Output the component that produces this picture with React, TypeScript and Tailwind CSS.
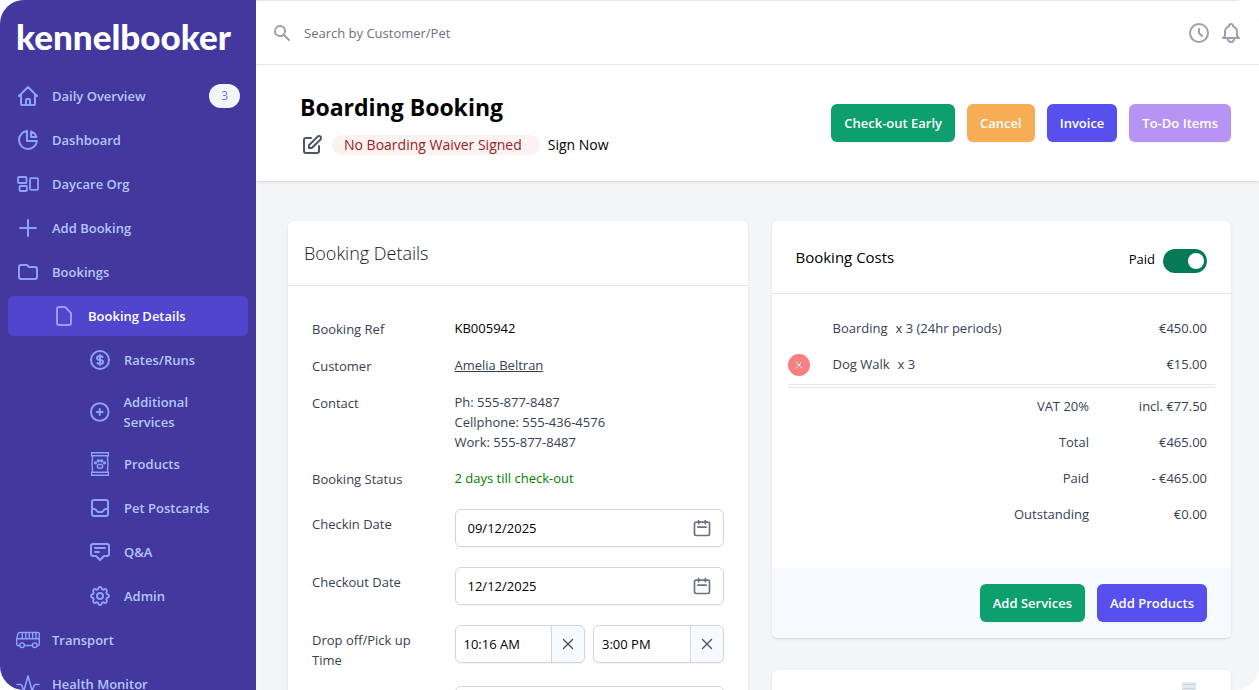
import type { ComponentType, ReactNode } from "react";
import {
  HiOutlineAnnotation,
  HiOutlineBell,
  HiOutlineCalendar,
  HiOutlineChartPie,
  HiOutlineClock,
  HiOutlineCog,
  HiOutlineCurrencyDollar,
  HiOutlineDocument,
  HiOutlineFolder,
  HiOutlineHome,
  HiOutlineInbox,
  HiOutlinePencilAlt,
  HiOutlinePlus,
  HiOutlinePlusCircle,
  HiSearch,
} from "react-icons/hi";

type IconProps = { className?: string };

const DaycareIcon = ({ className }: IconProps) => (
  <svg className={className} viewBox="0 0 24 24" fill="none" stroke="currentColor" strokeWidth="1.8">
    <rect x="2" y="5" width="8.5" height="6" rx="1" />
    <rect x="3.5" y="14" width="7.5" height="5" rx="1" />
    <rect x="14" y="6.2" width="8" height="11.6" rx="1" />
  </svg>
);

const FoodBagIcon = ({ className }: IconProps) => (
  <svg className={className} viewBox="0 0 24 24" fill="none" stroke="currentColor" strokeWidth="1.4">
    <path d="M3.6 0.7h16.8v3H3.6zM3.6 20.3h16.8v3H3.6z" />
    <path d="M4.6 3.7c-.7 5.5-.7 11 0 16.6M19.4 3.7c.7 5.5.7 11 0 16.6" />
    <ellipse cx="12" cy="14.2" rx="2.7" ry="2" />
    <g fill="currentColor" strokeWidth="0.8">
      <circle cx="7.6" cy="10.8" r="1.3" />
      <circle cx="10.4" cy="8.8" r="1.3" />
      <circle cx="13.6" cy="8.8" r="1.3" />
      <circle cx="16.4" cy="10.8" r="1.3" />
    </g>
  </svg>
);

const BusIcon = ({ className }: IconProps) => (
  <svg className={className} viewBox="0 0 24 24" fill="none" stroke="currentColor" strokeWidth="1.4">
    <path d="M3.4 17.5H2A1.3 1.3 0 01.7 16.2V11l1.2-5.300A1.900 1.900 0 013.700 4.500h18.200a1.400 1.400 0 011.400 1.400v10.300a1.300 1.300 0 01-1.300 1.300h-.7M8.600 17.500h7.800" />
    <path d="M1 10.800h22.300M6.200 4.500v5q0 1.300-1.500 1.300M9.800 4.500v6M13.200 4.500v6M16.600 4.500v6M20 4.500v6" />
    <circle cx="6" cy="17.200" r="2.300" />
    <circle cx="18.800" cy="17.200" r="2.300" />
  </svg>
);

const PulseIcon = ({ className }: IconProps) => (
  <svg
    className={className}
    viewBox="0 0 24 24"
    fill="none"
    stroke="currentColor"
    strokeWidth="1.6"
    strokeLinecap="round"
    strokeLinejoin="round"
  >
    <path d="M1 12.500h3.500c.8 0 1.200.5 1.500 1.300l1.800 5.200L12 4l4.200 15 1.800-5.200c.3-.8.700-1.300 1.500-1.300H23" />
  </svg>
);

const CrossIcon = ({ className }: IconProps) => (
  <svg className={className} viewBox="0 0 12 12" fill="none" stroke="currentColor" strokeWidth="1.4" strokeLinecap="round">
    <path d="M1.500 1.500l9 9M10.500 1.500l-9 9" />
  </svg>
);

type NavItem = {
  label: string;
  icon: ComponentType<IconProps>;
  level?: number;
  badge?: number;
  active?: boolean;
};

const navItems: NavItem[] = [
  { label: "Daily Overview", icon: HiOutlineHome, badge: 3 },
  { label: "Dashboard", icon: HiOutlineChartPie },
  { label: "Daycare Org", icon: DaycareIcon },
  { label: "Add Booking", icon: HiOutlinePlus },
  { label: "Bookings", icon: HiOutlineFolder },
  { label: "Booking Details", icon: HiOutlineDocument, level: 1, active: true },
  { label: "Rates/Runs", icon: HiOutlineCurrencyDollar, level: 2 },
  { label: "Additional Services", icon: HiOutlinePlusCircle, level: 2 },
  { label: "Products", icon: FoodBagIcon, level: 2 },
  { label: "Pet Postcards", icon: HiOutlineInbox, level: 2 },
  { label: "Q&A", icon: HiOutlineAnnotation, level: 2 },
  { label: "Admin", icon: HiOutlineCog, level: 2 },
  { label: "Transport", icon: BusIcon },
  { label: "Health Monitor", icon: PulseIcon },
];

const indents = ["pl-2", "pl-11", "pl-20"];

const Sidebar = () => {
  return (
    <aside className="w-64 shrink-0 overflow-hidden bg-[#42389d]">
      <div className="flex h-[72px] items-center px-4">
        <a href="#" className="font-[Lato] text-[35px] leading-10 font-black text-white">
          kennelbooker
        </a>
      </div>
      <nav className="flex flex-col gap-1 px-2 pt-1">
        {navItems.map(({ label, icon: Icon, level = 0, badge, active }) => (
          <a
            key={label}
            href="#"
            className={`flex items-center gap-3 rounded-md py-2 pr-2 font-semibold leading-5 ${indents[level]} ${
              active ? "bg-[#5145cd] text-white" : "text-[#b4c6fc]"
            }`}
          >
            <Icon className="size-6 min-w-0 text-[#8da2fb]" />
            <span className={level === 2 ? "min-w-0" : "flex-1"}>{label}</span>
            {badge && (
              <span className="rounded-full bg-[#f4f5f7] px-3 py-0.5 text-xs leading-5 font-normal text-[#6875f5]">
                {badge}
              </span>
            )}
          </a>
        ))}
      </nav>
    </aside>
  );
};

const TopBar = () => {
  return (
    <header className="flex h-[65px] items-center border-y border-gray-200 bg-white px-4">
      <label htmlFor="search" aria-label="Search" className="text-gray-400">
        <HiSearch className="size-5" />
      </label>
      <input
        id="search"
        type="search"
        placeholder="Search by Customer/Pet"
        className="ml-3 h-10 flex-1 outline-none placeholder:text-gray-500"
      />
      <div className="flex gap-2 text-gray-400">
        <button type="button" aria-label="History">
          <HiOutlineClock className="size-6" />
        </button>
        <button type="button" aria-label="Notifications">
          <HiOutlineBell className="size-6" />
        </button>
      </div>
    </header>
  );
};

const Button = ({ color, children }: { color: string; children: ReactNode }) => (
  <button
    type="button"
    className={`rounded-md px-[13px] py-[9px] leading-5 font-semibold text-white shadow-xs ${color}`}
  >
    {children}
  </button>
);

const PageHeading = () => {
  return (
    <div className="relative flex items-center justify-between bg-white py-6 pr-7 pl-11 shadow-sm">
      <div>
        <h1 className="text-[23px] leading-9 font-bold text-black">Boarding Booking</h1>
        <div className="mt-2 flex items-center text-sm font-medium">
          <button type="button" aria-label="Edit booking" className="text-gray-600">
            <HiOutlinePencilAlt className="size-6" />
          </button>
          <span className="ml-2 rounded-full bg-[#fdf2f2] pr-[18px] pl-3 leading-5 text-[#9b1c1c]">
            No Boarding Waiver Signed
          </span>
          <a href="#" className="ml-2 text-black">
            Sign Now
          </a>
        </div>
      </div>
      <div className="flex gap-3">
        <Button color="bg-[#0e9f6e]">Check-out Early</Button>
        <Button color="bg-[#f6ad55]">Cancel</Button>
        <Button color="bg-[#5850ec]">Invoice</Button>
        <Button color="bg-[#b794f4]">To-Do Items</Button>
      </div>
    </div>
  );
};

const DetailRow = ({ label, children }: { label: string; children: ReactNode }) => (
  <div className="grid grid-cols-3 gap-4">
    <dt className="mt-px">{label}</dt>
    <dd className="col-span-2">{children}</dd>
  </div>
);

const DateRow = ({ id, label, value }: { id: string; label: string; value: string }) => (
  <div className="grid grid-cols-3 gap-4">
    <label htmlFor={id} className="mt-px pt-2">
      {label}
    </label>
    <div className="col-span-2 mt-1 flex items-center rounded-md border border-gray-300 pr-[11px] shadow-xs">
      <input
        id={id}
        type="text"
        defaultValue={value}
        className="h-9 w-full min-w-0 flex-1 px-3 text-black outline-none"
      />
      <HiOutlineCalendar className="size-5 text-gray-500" />
    </div>
  </div>
);

const TimeField = ({ label, value }: { label: string; value: string }) => (
  <div className="flex min-w-0 flex-1 rounded-md border border-gray-300 bg-[#f7fafc] shadow-xs">
    <input
      type="text"
      aria-label={label}
      defaultValue={value}
      className="h-9 w-full min-w-0 flex-1 rounded-md bg-white px-2 text-black outline-none"
    />
    <button
      type="button"
      aria-label={`Clear ${label}`}
      className="flex w-[33px] items-center justify-center border-l border-gray-300 text-gray-600"
    >
      <CrossIcon className="size-3" />
    </button>
  </div>
);

const BookingDetails = () => {
  return (
    <section className="rounded-md bg-white shadow-sm">
      <h2 className="border-b border-gray-200 px-4 py-5 text-lg leading-6 font-light text-gray-900">
        Booking Details
      </h2>
      <div className="flex flex-col gap-4 px-6 py-8">
        <dl className="flex flex-col gap-4">
          <DetailRow label="Booking Ref">
            <span className="text-black">KB005942</span>
          </DetailRow>
          <DetailRow label="Customer">
            <a href="#" className="underline">
              Amelia Beltran
            </a>
          </DetailRow>
          <DetailRow label="Contact">
            <p>Ph: 555-877-8487</p>
            <p>Cellphone: 555-436-4576</p>
            <p>Work: 555-877-8487</p>
          </DetailRow>
          <DetailRow label="Booking Status">
            <span className="text-[#008000]">2 days till check-out</span>
          </DetailRow>
        </dl>
        <DateRow id="checkin" label="Checkin Date" value="09/12/2025" />
        <DateRow id="checkout" label="Checkout Date" value="12/12/2025" />
        <div className="grid grid-cols-3 gap-4">
          <span className="mt-px pt-2">Drop off/Pick up Time</span>
          <div className="col-span-2 mt-1 flex items-start gap-2">
            <TimeField label="Drop off time" value="10:16 AM" />
            <TimeField label="Pick up time" value="3:00 PM" />
          </div>
        </div>
        <div className="grid grid-cols-3 gap-4">
          <textarea
            aria-label="Notes"
            rows={3}
            className="col-span-2 col-start-2 rounded-md border border-gray-300 px-3 py-2 shadow-xs"
          />
        </div>
      </div>
    </section>
  );
};

const charges = [
  { name: "Boarding", quantity: "x 3 (24hr periods)", amount: "€450.00", removable: false },
  { name: "Dog Walk", quantity: "x 3", amount: "€15.00", removable: true },
];

const totals = [
  { label: "VAT 20%", amount: "incl. €77.50" },
  { label: "Total", amount: "€465.00" },
  { label: "Paid", amount: "- €465.00" },
  { label: "Outstanding", amount: "€0.00" },
];

const BookingCosts = () => {
  return (
    <section className="overflow-hidden rounded-md bg-white shadow-sm">
      <div className="flex h-[73px] items-center justify-between border-b border-gray-200 px-6">
        <h2 className="text-[15px] leading-6 text-black">Booking Costs</h2>
        <label className="flex items-start gap-2 pt-2 text-black">
          Paid
          <input type="checkbox" defaultChecked className="peer sr-only" />
          <span className="flex h-6 w-11 items-center justify-start rounded-full bg-gray-300 px-[3px] peer-checked:justify-end peer-checked:bg-[#057a55]">
            <span className="size-4 rounded-full bg-white" />
          </span>
        </label>
      </div>
      <div className="px-4 pt-4 pb-9">
        <table className="w-full border-separate border-spacing-0">
          <tbody>
            {charges.map((charge) => (
              <tr key={charge.name} className="align-top">
                <td className="w-[37px] py-2">
                  {charge.removable && (
                    <button
                      type="button"
                      aria-label={`Remove ${charge.name}`}
                      className="flex size-[22px] items-center justify-center rounded-full bg-[#f98080] text-white"
                    >
                      <CrossIcon className="size-2" />
                    </button>
                  )}
                </td>
                <td className="p-2" colSpan={2}>
                  {charge.name}
                  <span className="ml-2">{charge.quantity}</span>
                </td>
                <td className="p-2 text-right">{charge.amount}</td>
              </tr>
            ))}
          </tbody>
          <tbody className="text-right">
            {totals.map((total, index) => {
              const line = index === 0 ? "border-t-4 border-double border-gray-200" : "";
              return (
                <tr key={total.label}>
                  <td colSpan={3} className={`p-2 ${line}`}>
                    {total.label}
                  </td>
                  <td className={`w-[118px] p-2 ${line}`}>{total.amount}</td>
                </tr>
              );
            })}
          </tbody>
        </table>
      </div>
      <div className="flex justify-end gap-3 bg-[#f7fafc] px-6 py-4">
        <Button color="bg-[#0e9f6e]">Add Services</Button>
        <Button color="bg-[#5850ec]">Add Products</Button>
      </div>
    </section>
  );
};

const NotesCard = () => (
  <section className="flex h-40 justify-end rounded-md bg-white px-[34px] pt-3 shadow-sm">
    <svg className="h-5 w-4" viewBox="0 0 16 20" fill="none">
      <path d="M1 0h14v20H1z" fill="#e2e8f0" />
      <path d="M2 2.500h12M2 6.500h12M2 10.500h12M2 14.500h12" stroke="#cbd5e0" />
    </svg>
  </section>
);

const App = () => {
  return (
    <div className="flex h-screen overflow-hidden rounded-3xl bg-[#f4f5f7] font-['Open_Sans','Noto_Sans',sans-serif] text-[13px] leading-5 text-gray-700">
      <Sidebar />
      <div className="flex min-w-0 flex-1 flex-col">
        <TopBar />
        <main className="flex-1 overflow-y-auto [scrollbar-width:none]">
          <PageHeading />
          <div className="grid grid-cols-2 items-start gap-6 pt-10 pr-7 pb-10 pl-8">
            <BookingDetails />
            <div className="flex flex-col gap-8">
              <BookingCosts />
              <NotesCard />
            </div>
          </div>
        </main>
      </div>
    </div>
  );
};

export default App;
